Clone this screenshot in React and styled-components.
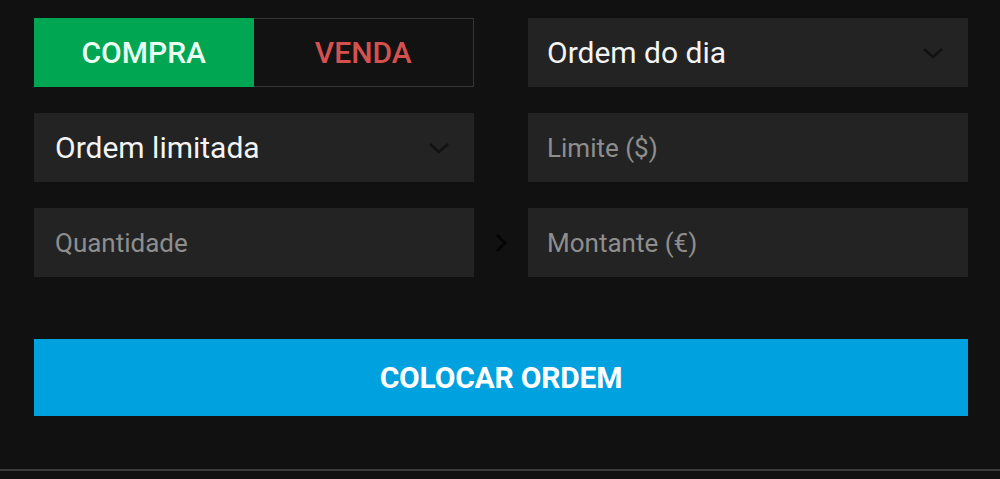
import React from 'react';
import styled, { createGlobalStyle } from 'styled-components';

const GlobalStyle = createGlobalStyle`
  html, body {
    margin: 0;
    padding: 0;
    background: #111111;
  }
  body {
    font-family: Roboto, "Liberation Sans", sans-serif;
    width: 1000px;
    height: 479px;
    overflow: hidden;
  }
`;

const Page = styled.div`
  width: 1000px;
  height: 471px;
  box-sizing: border-box;
  padding: 18px 32px 0 34px;
  border-bottom: 2px solid #3a3a3a;
`;

const Grid = styled.div`
  display: grid;
  grid-template-columns: 440px 54px 440px;
  grid-auto-rows: 69px;
  row-gap: 26px;
`;

const Toggle = styled.div`
  display: flex;
  height: 69px;
`;

const Side = styled.div`
  flex: 1;
  display: flex;
  align-items: center;
  justify-content: center;
  font-size: 30px;
  font-weight: 500;
  color: ${p => (p.active ? '#eafff2' : '#d5514f')};
  background: ${p => (p.active ? '#00a651' : '#121212')};
  border: ${p => (p.active ? 'none' : '1px solid #353535')};
  border-left: none;
`;

const Field = styled.div`
  display: flex;
  align-items: center;
  justify-content: space-between;
  background: #232323;
  padding: 0 24px 0 ${p => p.pad || 21}px;
  font-size: ${p => (p.placeholder ? 26 : 30)}px;
  color: ${p => (p.placeholder ? '#8e8e8e' : '#f4f4f4')};
`;

const Spacer = styled.div`
  display: flex;
  align-items: center;
  justify-content: center;
`;

const Submit = styled.div`
  margin-top: 62px;
  width: 934px;
  height: 77px;
  background: #00a1df;
  display: flex;
  align-items: center;
  justify-content: center;
  color: #ffffff;
  font-size: 30px;
  font-weight: 700;
  letter-spacing: -0.2px;
`;

const Chevron = () => (
  <svg width="22" height="14" viewBox="0 0 22 14">
    <path d="M2 3 L11 11 L20 3" fill="none" stroke="#121212" strokeWidth="2.6" />
  </svg>
);

const Arrow = () => (
  <svg width="14" height="20" viewBox="0 0 14 20">
    <path d="M3 2 L11 10 L3 18" fill="none" stroke="#050505" strokeWidth="3" />
  </svg>
);

export default function App() {
  return (
    <>
      <GlobalStyle />
      <Page>
        <Grid>
          <Toggle>
            <Side active>COMPRA</Side>
            <Side>VENDA</Side>
          </Toggle>
          <div />
          <Field pad={19}>
            Ordem do dia
            <Chevron />
          </Field>

          <Field>
            Ordem limitada
            <Chevron />
          </Field>
          <div />
          <Field pad={19} placeholder="true">Limite ($)</Field>

          <Field placeholder="true">Quantidade</Field>
          <Spacer>
            <Arrow />
          </Spacer>
          <Field pad={19} placeholder="true">Montante (€)</Field>
        </Grid>
        <Submit>COLOCAR ORDEM</Submit>
      </Page>
    </>
  );
}
